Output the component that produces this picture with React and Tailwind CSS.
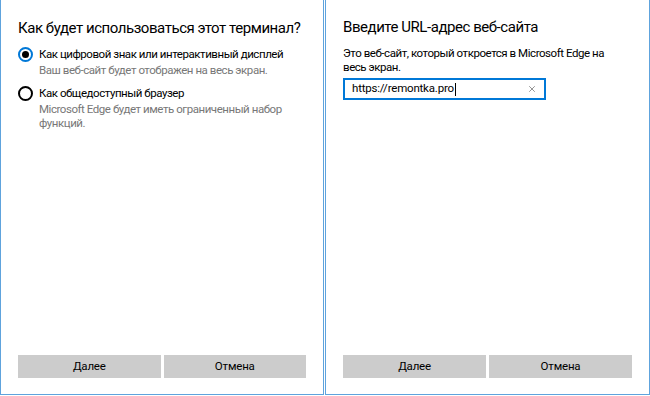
import React from 'react';
import { X } from 'lucide-react';

const font = { fontFamily: 'Roboto, "Liberation Sans", sans-serif' };

const Radio = ({ checked }) => (
  <span
    className={`mt-[1px] flex h-[15px] w-[15px] shrink-0 items-center justify-center rounded-full border-2 ${
      checked ? 'border-[#0078d7]' : 'border-black'
    }`}
  >
    {checked && <span className="h-[7px] w-[7px] rounded-full bg-black" />}
  </span>
);

const Option = ({ checked, title, hint }) => (
  <div className="flex gap-[6px]">
    <Radio checked={checked} />
    <div className="flex flex-col whitespace-nowrap text-[11.5px] tracking-[-0.45px]">
      <div className="leading-[17px] text-black">{title}</div>
      <div className="leading-[14px] text-[#777777]">{hint}</div>
    </div>
  </div>
);

const Buttons = () => (
  <div className="mt-auto flex gap-[3px] text-[11.5px] tracking-[-0.2px]">
    <button className="h-[23px] flex-1 bg-[#cccccc] text-black">Далее</button>
    <button className="h-[23px] flex-1 bg-[#cccccc] text-black">Отмена</button>
  </div>
);

export default function App() {
  return (
    <div className="flex h-[396px] w-[650px] bg-white" style={font}>
      <div className="flex h-[395px] w-[324px] flex-col border-x border-b border-[#5ea3dd] px-[17px] pb-[16px] pt-[16px]">
        <h1 className="whitespace-nowrap text-[15px] leading-[24px] tracking-[-0.45px] text-black">Как будет использоваться этот терминал?</h1>
        <div className="mt-[6px] flex flex-col gap-[8px]">
          <Option
            checked
            title="Как цифровой знак или интерактивный дисплей"
            hint="Ваш веб-сайт будет отображен на весь экран."
          />
          <Option
            title="Как общедоступный браузер"
            hint={<>Microsoft Edge будет иметь ограниченный набор<br />функций.</>}
          />
        </div>
        <Buttons />
      </div>
      <div className="ml-[1px] flex h-[395px] w-[325px] flex-col border-x border-b border-[#5ea3dd] px-[17px] pb-[16px] pt-[15px]">
        <h1 className="whitespace-nowrap text-[15px] leading-[24px] tracking-[-0.45px] text-black">Введите URL-адрес веб-сайта</h1>
        <p className="mt-[7px] whitespace-nowrap text-[11.5px] leading-[14px] tracking-[-0.45px] text-black">
          Это веб-сайт, который откроется в Microsoft Edge на<br />весь экран.
        </p>
        <div className="mt-[4px] flex h-[22px] w-[203px] items-center border-2 border-[#0078d7] pl-[7px] pr-[7px] text-[11.5px] tracking-[-0.2px]">
          <span className="text-black">https://remontka.pro</span>
          <span className="ml-[1px] h-[13px] w-px bg-black" />
          <X className="ml-auto text-[#555]" size={10} strokeWidth={1.5} />
        </div>
        <Buttons />
      </div>
    </div>
  );
}
